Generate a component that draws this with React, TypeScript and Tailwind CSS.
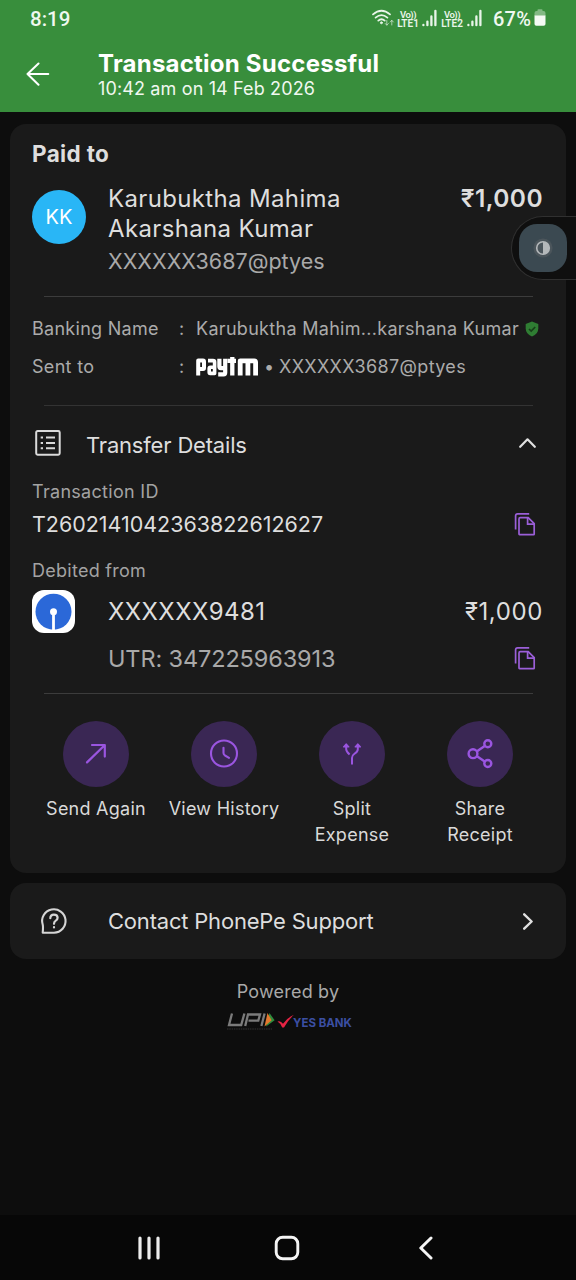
import React from "react";

function Divider({ className = "" }: { className?: string }) {
  return <div className={`ml-[34px] mr-[33px] h-px bg-[#3c3c3c] ${className}`} />;
}

function CopyIcon() {
  return (
    <svg className="h-6 w-6 text-[#9b5fd8]" viewBox="0 0 24 24" fill="none" stroke="currentColor" strokeWidth="1.7">
      <path d="M16.2 1.8H4.6Q2.6 1.8 2.6 3.9V17.4" />
      <path d="M7.3 5.6H15.2L21.2 11.6V22.2Q21.2 22.6 20.6 22.6H6.5Q6 22.6 6 22V7Q6 5.6 7.3 5.6Z" />
      <path d="M14.6 5.8V12.2H21.2" />
    </svg>
  );
}

function Signal() {
  return (
    <svg className="h-[18px] w-[15px]" viewBox="0 0 15 18" stroke="#e9f5e9" strokeWidth="2.3" strokeLinecap="round">
      <path d="M1.4 15.9V16.2M5.4 12.6V16.2M9.4 7.4V16.2M13.4 1.8V16.2" />
    </svg>
  );
}

function Lte({ n }: { n: string }) {
  return (
    <div className="flex w-[22px] flex-col items-center text-[9.5px] leading-[9px] font-semibold text-[#e9f5e9] font-['Roboto',sans-serif]">
      <span className="tracking-[-0.5px]">Vo))</span>
      <span className="text-[10px]">LTE{n}</span>
    </div>
  );
}

function StatusBar() {
  return (
    <div className="flex h-[38px] items-center text-[#f0f8f0]">
      <span className="ml-[30px] w-[342px] text-[20.5px] leading-6 font-medium font-['Roboto',sans-serif]">8:19</span>
      <svg className="mt-[-3px] h-[18px] w-[23px]" viewBox="0 0 23 18" fill="none" stroke="#e9f5e9" strokeWidth="1.8" strokeLinecap="round">
        <path d="M1 5.4Q9.5-1.8 18 5.4" />
        <path d="M3.6 8.6Q9.5 3.6 15.4 8.6" />
        <path d="M6.3 11.6Q9.5 8.8 12.7 11.6" />
        <circle cx="9.4" cy="13.8" r="1" fill="#e9f5e9" strokeWidth="0.8" />
        <path d="M14.8 11.5V16M13.2 14.5L14.8 16.2L16.4 14.5M19.8 16V11.5M18.2 13L19.8 11.3L21.4 13" strokeWidth="1" opacity=".65" />
      </svg>
      <div className="ml-[2px] flex items-center">
        <Lte n="1" />
        <div className="ml-[3px] mt-[-2px]"><Signal /></div>
        <div className="ml-[4px]"><Lte n="2" /></div>
        <div className="ml-[4px] mt-[-2px]"><Signal /></div>
      </div>
      <span className="ml-[11px] w-[41px] whitespace-nowrap text-[20px] leading-6 font-medium tracking-[0.2px] font-['Roboto',sans-serif]">67%</span>
      <svg className="mt-[-3px] h-[17px] w-[12px]" viewBox="0 0 12 17">
        <path d="M0.5 7V4Q.5 2 2.5 2H3.5V1Q3.5 .3 4.3 .3H7.7Q8.5 .3 8.5 1V2H9.5Q11.5 2 11.5 4V7Z" fill="#82b984" />
        <path d="M.5 6.5H11.5V15Q11.5 16.8 9.7 16.8H2.3Q.5 16.8 .5 15Z" fill="#f4faf4" />
      </svg>
    </div>
  );
}

function Action({ label, children }: { label: React.ReactNode; children: React.ReactNode }) {
  return (
    <div className="flex w-32 flex-col items-center">
      <div className="flex h-[66px] w-[66px] items-center justify-center rounded-full bg-[#3a2754] text-[#9a55e0]">
        {children}
      </div>
      <div className="mt-[9px] text-center text-[18px] leading-[25.5px] tracking-[0.25px] whitespace-nowrap text-[#d9d9d9]">{label}</div>
    </div>
  );
}

export default function App() {
  return (
    <div className="relative flex h-[1280px] w-[576px] flex-col overflow-hidden bg-[#0d0d0d] font-['Inter',sans-serif] text-[#dedede]">
      <header className="h-28 bg-[#388e3c]">
        <StatusBar />
        <div className="flex">
          <svg className="ml-[26px] mt-6 h-6 w-6" viewBox="0 0 24 24" fill="none" stroke="#fff" strokeWidth="2" strokeLinecap="round" strokeLinejoin="round">
            <path d="M12.5 1.5L1.5 12L12.5 22.8M1.5 12H22.3" />
          </svg>
          <div className="ml-12 mt-[12px] whitespace-nowrap text-white">
            <h1 className="text-[24px] leading-7 font-bold tracking-[0.23px]">Transaction Successful</h1>
            <p className="mt-[-1px] text-[18px] leading-[23px] tracking-[0.14px] text-[#f0f8f0]">10:42 am on 14 Feb 2026</p>
          </div>
        </div>
      </header>

      <main className="flex flex-col">
        <section className="mx-[10px] mt-3 h-[749px] rounded-2xl bg-[#1a1a1a] pt-[15px]">
          <h2 className="ml-[22px] text-[22.5px] leading-[30px] font-bold tracking-[0.35px]">Paid to</h2>
          <div className="mt-[15px] flex h-[92px] pr-[23px] pl-[22px]">
            <div className="mt-[6px] flex h-[54px] w-[54px] items-center justify-center rounded-full bg-[#29b6f6] text-[20px] text-white">KK</div>
            <div className="ml-[22px] whitespace-nowrap">
              <p className="text-[24px] leading-[29.5px] tracking-[0.35px]">Karubuktha Mahima<br />Akarshana Kumar</p>
              <p className="mt-[3px] text-[21.5px] leading-[30px] text-[#a9a9a9]">XXXXXX3687@ptyes</p>
            </div>
            <span className="ml-auto text-[24.5px] leading-[29.5px] font-semibold tracking-[0.4px]">₹1,000</span>
          </div>
          <Divider className="mt-5" />
          <div className="mt-[19px] flex h-6 items-center whitespace-nowrap pl-[22px] text-[18px] text-[#ababab]">
            <span className="w-[147px] tracking-[0.28px]">Banking Name</span>
            <span className="w-[17px]">:</span>
            <span className="w-[323px] tracking-[0.3px]">Karubuktha Mahim...karshana Kumar</span>
            <svg className="ml-[6px] mt-[1px] h-4 w-[14px]" viewBox="0 0 14 16">
              <path d="M7 .6L13.3 3V7.5Q13.3 13 7 15.5Q.7 13 .7 7.5V3Z" fill="#2f7d33" />
              <path d="M4 8L6.2 10.1L10.2 6" fill="none" stroke="#173f19" strokeWidth="1.7" />
            </svg>
          </div>
          <div className="mt-[14px] flex h-6 items-center whitespace-nowrap pl-[22px] text-[18px] text-[#ababab]">
            <span className="w-[147px] tracking-[0.3px]">Sent to</span>
            <span className="w-[16px]">:</span>
            <svg className="mt-[2px] h-[22px] w-[64px]" viewBox="0 0 64 22" fill="none" stroke="#fff" strokeWidth="4" strokeLinejoin="round">
              <path d="M3.2 19.6V4.6H8Q9 4.6 9 5.8V11.8Q9 13 8 13H4" />
              <path d="M13 4.6H18Q19.6 4.6 19.6 6V17.4H15.2Q14.2 17.4 14.2 16.2V12.4Q14.2 11.2 15.4 11.2H19" strokeWidth="3.6" />
              <path d="M24.4 2.8V10.6Q24.4 12.2 25.8 12.2H30M30.2 2.8V16.6Q30.2 18.4 28.6 18.4H23.2" strokeWidth="4.2" />
              <path d="M32.4 4.8H41M37.3 1V19.6" strokeWidth="4.3" />
              <path d="M45.2 19.6V4.8H59.2Q60.6 4.8 60.6 6.2V19.6M52.9 4.8V19.6" strokeWidth="4.8" />
            </svg>
            <span className="ml-[5px] w-[15px]">•</span>
            <span className="tracking-[0.36px]">XXXXXX3687@ptyes</span>
          </div>
          <Divider className="mt-[27px] !bg-[#333]" />
          <div className="mt-6 flex h-[30px] items-center pr-[30px] pl-[25px]">
            <svg className="mt-[-4px] h-[26px] w-[26px]" viewBox="0 0 26 26" fill="none" stroke="#dadada" strokeWidth="2">
              <rect x="1.2" y="1" width="23.5" height="23.7" rx="1.4" />
              <path d="M11 7.5H20M11 12.9H20M11 18.3H20M5.7 7.5H8M5.7 12.9H8M5.7 18.3H8" strokeWidth="2" />
            </svg>
            <span className="ml-[25px] text-[22px] tracking-[-0.18px]">Transfer Details</span>
            <svg className="ml-auto mt-[-4px] h-[10px] w-[17px]" viewBox="0 0 17 10" fill="none" stroke="#e0e0e0" strokeWidth="2.2" strokeLinecap="round" strokeLinejoin="round">
              <path d="M1.2 8.8L8.5 1.3L15.8 8.8" />
            </svg>
          </div>
          <p className="mt-5 ml-[22px] text-[18px] leading-6 tracking-[0.3px] text-[#a3a3a3]">Transaction ID</p>
          <div className="mt-[6px] flex h-7 items-center justify-between pr-[29px] pl-[22px]">
            <span className="text-[21.5px] tracking-[-0.03px]">T2602141042363822612627</span>
            <CopyIcon />
          </div>
          <p className="mt-[21px] ml-[22px] text-[18px] leading-6 tracking-[0.26px] text-[#a3a3a3]">Debited from</p>
          <div className="mt-[7px] flex h-[43px] items-center pr-[23px] pl-[22px] text-[24px] tracking-[0.42px]">
            <svg className="h-[43px] w-[43px]" viewBox="0 0 43 43">
              <rect width="43" height="43" rx="12" fill="#fff" />
              <circle cx="21.5" cy="21.7" r="18" fill="#2b68d8" />
              <circle cx="21.5" cy="21.7" r="3.5" fill="#fff" />
              <path d="M21.5 22V40" stroke="#fff" strokeWidth="2.8" />
            </svg>
            <span className="ml-[33px]">XXXXXX9481</span>
            <span className="ml-auto tracking-[0.6px]">₹1,000</span>
          </div>
          <div className="mt-[11px] flex h-7 items-center justify-between pr-[29px] pl-[98px]">
            <span className="mt-[2px] text-[23.5px] tracking-[-0.12px] text-[#a9a9a9]">UTR: 347225963913</span>
            <CopyIcon />
          </div>
          <Divider className="mt-[21px]" />
          <div className="mt-[27px] ml-[22px] flex">
            <Action label="Send Again">
              <svg className="h-6 w-6" viewBox="0 0 24 24" fill="none" stroke="currentColor" strokeWidth="2.2" strokeLinecap="round" strokeLinejoin="round">
                <path d="M3 20.4L20.6 3.2M8 3H20.8V14.6" />
              </svg>
            </Action>
            <Action label="View History">
              <svg className="h-[30px] w-[30px]" viewBox="0 0 30 30" fill="none" stroke="currentColor" strokeWidth="2.1" strokeLinecap="round">
                <circle cx="15" cy="14.5" r="13" />
                <path d="M14.5 8.7V14Q14.5 15.5 16 16.5L20 18.8" />
              </svg>
            </Action>
            <Action label={<>Split<br />Expense</>}>
              <svg className="h-6 w-6" viewBox="0 0 24 24" fill="none" stroke="currentColor" strokeWidth="2" strokeLinejoin="round">
                <path d="M6.2 4V7.2Q6.2 9.4 9.6 12.6M17.8 4V7.2Q17.8 9.8 14.2 12Q12 13.4 12 16V22.5" />
                <path d="M3.5 4.8L6.2 2L8.9 4.8ZM15.1 4.8L17.8 2L20.5 4.8Z" fill="currentColor" strokeWidth="1.2" />
              </svg>
            </Action>
            <Action label={<>Share<br />Receipt</>}>
              <svg className="h-[30px] w-[26px]" viewBox="0 0 26 30" fill="none" stroke="currentColor" strokeWidth="2.4">
                <circle cx="6" cy="14.7" r="4.4" />
                <circle cx="20.8" cy="4.8" r="3.5" />
                <circle cx="20.8" cy="24.5" r="3.5" />
                <path d="M10 12.2L17.7 6.9M10 17.2L17.7 22.5" />
              </svg>
            </Action>
          </div>
        </section>

        <section className="mx-[10px] mt-[10px] flex h-[76px] items-center rounded-2xl bg-[#1a1a1a] pr-[33px] pl-[30px]">
          <svg className="h-7 w-7" viewBox="0 0 28 28" fill="none" stroke="#d5d5d5" strokeWidth="2.1" strokeLinecap="round" strokeLinejoin="round">
            <path d="M2.7 25.7H14A11.7 11.7 0 1 0 2.7 17.5Q3.3 20 2.7 25.7Z" />
            <path d="M10.3 11.2Q10.3 7.6 13.9 7.6Q17.6 7.6 17.6 10.8Q17.6 12.6 15.8 13.6Q14 14.6 14 16.8M14 20.2V20.4" strokeWidth="2.2" />
          </svg>
          <span className="ml-10 text-[22px] tracking-[-0.2px]">Contact PhonePe Support</span>
          <svg className="ml-auto h-[17px] w-[10px]" viewBox="0 0 10 17" fill="none" stroke="#e0e0e0" strokeWidth="2.4" strokeLinecap="round" strokeLinejoin="round">
            <path d="M1.2 1.3L8.6 8.5L1.2 15.7" />
          </svg>
        </section>

        <p className="mt-[21px] text-center text-[18px] leading-6 tracking-[0.2px] text-[#a9a9a9]">Powered by</p>
        <div className="mt-[7px] ml-[226px] flex h-5 items-center">
          <svg className="h-5 w-[50px]" viewBox="0 0 50 20" fill="none" stroke="#7b7b7b" strokeWidth="2.3">
            <path d="M6 2.5L3 14H15.2L18.4 2.5M19.2 15L22 3.5H34L32.3 9.6H22.5M35.4 15L38.6 2.5" />
            <path d="M43.5 2L48.6 9.3L40 15.5Z" fill="#308c3d" stroke="none" />
            <path d="M41.5 2L45.6 9.3L38.5 15.5Z" fill="#e3782e" stroke="none" />
            <path d="M1 18H46" stroke="#333" strokeWidth="1.2" strokeDasharray="1.5 .8" />
          </svg>
          <svg className="ml-[1px] h-[14px] w-[18px]" viewBox="0 0 18 14">
            <path d="M.5 7.5Q3.5 6.2 6 9.7Q10 3.8 17 .8Q11 6 7 13.5H5.2Q3.4 9 .5 7.5Z" fill="#e52343" />
          </svg>
          <span className="ml-[-2px] mt-[3px] whitespace-nowrap text-[11.5px] leading-4 font-bold text-[#3b4fa2]">YES BANK</span>
        </div>
      </main>

      <nav className="mt-auto flex h-[65px] items-center bg-[#070707]">
        <svg className="ml-[137px] h-6 w-6" viewBox="0 0 24 24" stroke="#ededed" strokeWidth="3.2" strokeLinecap="round">
          <path d="M3 2V22M12 2V22M21 2V22" />
        </svg>
        <svg className="ml-[113px] h-[26px] w-[26px]" viewBox="0 0 26 26" fill="none" stroke="#f4f4f4" strokeWidth="2.9">
          <rect x="2.2" y="2.2" width="21.6" height="21.6" rx="6.5" />
        </svg>
        <svg className="ml-[118px] h-6 w-4" viewBox="0 0 16 24" fill="none" stroke="#f4f4f4" strokeWidth="3" strokeLinecap="round" strokeLinejoin="round">
          <path d="M13 2L2.8 12L13 22" />
        </svg>
      </nav>

      <div className="absolute top-[216px] right-0 flex h-16 w-[65px] items-center rounded-l-full border border-r-0 border-[#303030] bg-[#0f0f0f] pl-[7px]">
        <div className="flex h-12 w-12 items-center justify-center rounded-[18px] bg-[#3b4951]">
          <svg className="h-5 w-5" viewBox="0 0 20 20">
            <circle cx="10" cy="10" r="9.6" fill="#4b555b" />
            <circle cx="10" cy="10" r="6.3" fill="none" stroke="#b4b8ba" strokeWidth="1.6" />
            <path d="M10 3.7A6.3 6.3 0 0 1 10 16.3Z" fill="#b4b8ba" />
          </svg>
        </div>
      </div>
    </div>
  );
}
